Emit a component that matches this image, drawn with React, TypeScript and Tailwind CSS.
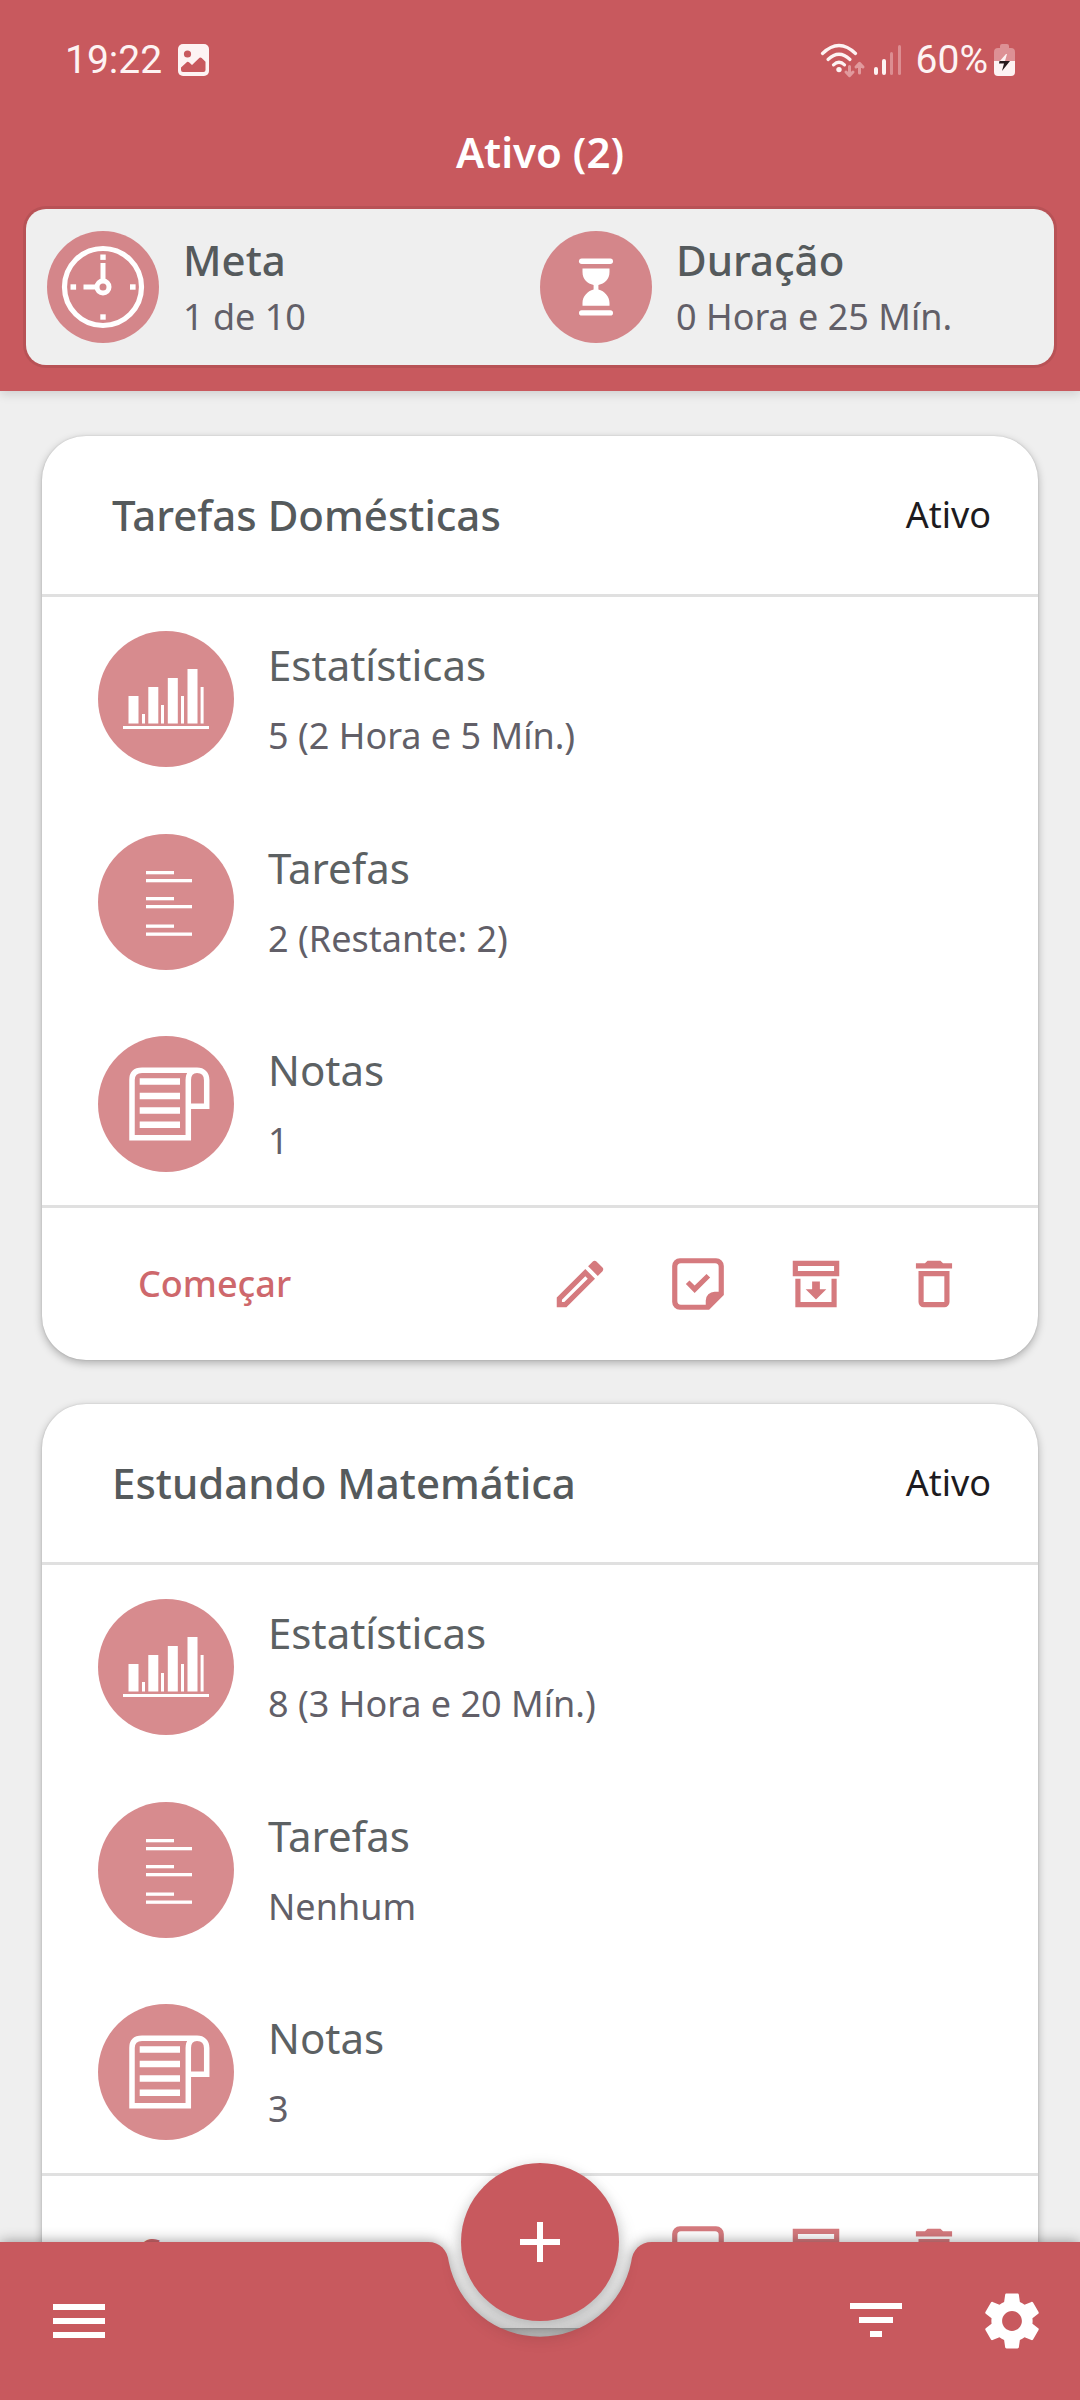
import React from "react";

type Stat = { kind: "stats" | "tasks" | "notes"; title: string; value: string };
type Project = { name: string; status: string; rows: Stat[] };

const projects: Project[] = [
  {
    name: "Tarefas Domésticas",
    status: "Ativo",
    rows: [
      { kind: "stats", title: "Estatísticas", value: "5 (2 Hora e 5 Mín.)" },
      { kind: "tasks", title: "Tarefas", value: "2 (Restante: 2)" },
      { kind: "notes", title: "Notas", value: "1" },
    ],
  },
  {
    name: "Estudando Matemática",
    status: "Ativo",
    rows: [
      { kind: "stats", title: "Estatísticas", value: "8 (3 Hora e 20 Mín.)" },
      { kind: "tasks", title: "Tarefas", value: "Nenhum" },
      { kind: "notes", title: "Notas", value: "3" },
    ],
  },
];

function ImageIcon() {
  return (
    <svg width="31" height="32" viewBox="0 0 31 32" aria-hidden="true">
      <rect width="31" height="32" rx="5" fill="#fdf3f3" />
      <circle cx="9.5" cy="10" r="3.6" fill="#c8595e" />
      <path
        d="M3 23.5 L9 18 Q10 17.4 11 18.2 L14 21 L21.5 13.8 Q22.6 13 23.7 13.9 L27.5 17.8 V26 Q27.5 28 25.5 28 H5 Q3 28 3 26 Z"
        fill="#c8595e"
      />
    </svg>
  );
}

function WifiIcon() {
  return (
    <svg width="46" height="36" viewBox="0 0 46 36" fill="none" strokeLinecap="round" aria-hidden="true">
      <g stroke="#fdf3f3" strokeWidth="3.2">
        <path d="M2.5 11.5 Q19 -4.5 35.5 11.5" />
        <path d="M8 17.5 Q19 7 30 17.5" />
        <path d="M13.5 22.8 Q19 17.6 24.5 22.8" />
      </g>
      <circle cx="19" cy="27.6" r="2.7" fill="#fdf3f3" />
      <g stroke="#e19a9d" strokeWidth="3" strokeLinejoin="round">
        <path d="M29.5 24.5 V33 M26 30 L29.5 33.6 L33 30" />
        <path d="M39.5 31 V22 M36 25 L39.5 21.4 L43 25" />
      </g>
    </svg>
  );
}

function SignalIcon() {
  return (
    <svg width="28" height="30" viewBox="0 0 28 30" aria-hidden="true">
      <rect x="0" y="22" width="4" height="8" rx="2" fill="#fdf3f3" />
      <rect x="8" y="14" width="4" height="16" rx="2" fill="#fdf3f3" />
      <rect x="16" y="7" width="3" height="23" rx="1.5" fill="#dc8d91" />
      <rect x="24" y="0" width="3" height="30" rx="1.5" fill="#dc8d91" />
    </svg>
  );
}

function BatteryIcon() {
  return (
    <svg width="21" height="32" viewBox="0 0 21 32" aria-hidden="true">
      <path d="M6 4 V2 Q6 0 8 0 H13 Q15 0 15 2 V4 H17 Q21 4 21 8 V17 H0 V8 Q0 4 4 4 Z" fill="#dd9195" />
      <path d="M0 17 H21 V28 Q21 32 17 32 H4 Q0 32 0 28 Z" fill="#fdf3f3" />
      <path d="M12 10 L5 18 H10 L8 27 L16 17 H11 L13 10 Z" fill="#fdf3f3" />
      <path d="M5.5 17 H16 L8 27 L10 19.5 H5 Z" fill="#261a1c" />
    </svg>
  );
}

function ClockIcon() {
  return (
    <svg viewBox="0 0 112 112" className="size-full" fill="none" stroke="#fff" aria-hidden="true">
      <circle cx="56" cy="56" r="38.5" strokeWidth="5.2" />
      <circle cx="56" cy="56" r="6" strokeWidth="5" />
      <path d="M56 48.5 V32 M48.5 56 H36.5" strokeWidth="5" />
      <g fill="#fff" stroke="none">
        <rect x="53.3" y="23.5" width="5.4" height="5.4" />
        <rect x="53.3" y="83.3" width="5.4" height="5.4" />
        <rect x="23.5" y="53.3" width="5.6" height="5.4" />
        <rect x="83" y="53.3" width="5.6" height="5.4" />
      </g>
    </svg>
  );
}

function HourglassIcon() {
  return (
    <svg viewBox="0 0 112 112" className="size-full" fill="#fff" aria-hidden="true">
      <rect x="39" y="27.5" width="34" height="5.4" rx="2.7" />
      <rect x="39" y="79.2" width="34" height="5.4" rx="2.7" />
      <path d="M42.5 37.5 H69.5 V41 C69.5 48.5 64.5 52.5 58.4 54 V58.5 C64.5 60 69.5 65.5 69.5 72 V74.8 H42.5 V72 C42.5 65.5 47.5 60 53.6 58.5 V54 C47.5 52.5 42.5 48.5 42.5 41 Z" />
    </svg>
  );
}

function RowIcon({ kind }: { kind: Stat["kind"] }) {
  if (kind === "stats") {
    return (
      <svg viewBox="0 0 136 136" className="size-full" fill="#fff" aria-hidden="true">
        <rect x="25" y="95" width="86" height="3" />
        <rect x="30.5" y="65" width="10" height="27.5" />
        <rect x="44" y="83" width="3" height="9.5" />
        <rect x="50.3" y="56" width="10" height="36.5" />
        <rect x="63" y="74" width="3" height="18.5" />
        <rect x="69.8" y="47" width="10" height="45.5" />
        <rect x="83" y="65" width="3" height="27.5" />
        <rect x="89.5" y="38" width="10" height="54.5" />
        <rect x="102.6" y="56" width="3" height="36.5" />
      </svg>
    );
  }
  if (kind === "tasks") {
    return (
      <svg viewBox="0 0 136 136" className="size-full" fill="#fff" aria-hidden="true">
        <rect x="48" y="37" width="28" height="3.3" />
        <rect x="48" y="45" width="46" height="3.3" />
        <rect x="48" y="63" width="28" height="3.3" />
        <rect x="48" y="71" width="46" height="3.3" />
        <rect x="48" y="90.5" width="28" height="3.3" />
        <rect x="48" y="98.5" width="46" height="3.3" />
      </svg>
    );
  }
  return (
    <svg viewBox="0 0 136 136" className="size-full" fill="none" stroke="#fff" strokeWidth="5.5" aria-hidden="true">
      <path d="M99 34.2 H44 Q34 34.2 34 44 V101.7 H90.3 V44 C90.3 37.5 94 34.2 99 34.2 C105 34.2 108.7 38 108.7 44 V70.2 H90.3" />
      <path d="M41.7 45.5 H82 M41.7 60 H82 M41.7 74.5 H82 M41.7 88.8 H82" strokeWidth="6.4" />
    </svg>
  );
}

function IconButton({ label, children }: { label: string; children: React.ReactNode }) {
  return (
    <button type="button" aria-label={label} className="flex size-[62px] items-center justify-center text-[#d57a7e]">
      <svg viewBox="0 0 24 24" className="size-full" fill="currentColor" aria-hidden="true">
        {children}
      </svg>
    </button>
  );
}

function SummaryItem({ icon, title, value }: { icon: React.ReactNode; title: string; value: string }) {
  return (
    <div className="flex items-center gap-[24px]">
      <div className="size-[112px] shrink-0 rounded-full bg-[#d4868a]">{icon}</div>
      <div className="flex flex-col gap-[6px]">
        <span className="text-[42px] leading-[54px] font-medium text-[#555a5c]">{title}</span>
        <span className="text-[36px] leading-[48px] text-[#625f68]">{value}</span>
      </div>
    </div>
  );
}

function ProjectCard({ project }: { project: Project }) {
  return (
    <article className="rounded-[44px] bg-white shadow-[0_3px_8px_rgba(0,0,0,0.28),0_0_2px_rgba(0,0,0,0.14)]">
      <header className="flex h-[158px] items-center justify-between pr-[47px] pl-[70px]">
        <h2 className="text-[42px] leading-[54px] font-medium text-[#555a5c]">{project.name}</h2>
        <span className="text-[36px] leading-[48px] text-[#1d1b20]">{project.status}</span>
      </header>
      <ul className="border-y-[3px] border-[#e0e0e0]">
        {project.rows.map((row) => (
          <li key={row.kind} className="flex h-[203px] items-center gap-[34px] pl-[56px] last:h-[202px]">
            <div className="size-[136px] shrink-0 rounded-full bg-[#d78b8e]">
              <RowIcon kind={row.kind} />
            </div>
            <div className="flex flex-col gap-[20px]">
              <span className="text-[42px] leading-[54px] text-[#5c6163]">{row.title}</span>
              <span className="text-[36px] leading-[48px] text-[#625f68]">{row.value}</span>
            </div>
          </li>
        ))}
      </ul>
      <footer className="flex h-[152px] items-center justify-between pr-[73px] pl-[96px]">
        <button type="button" className="text-[36px] leading-[48px] font-medium text-[#ce686c]">
          Começar
        </button>
        <div className="flex gap-[56px]">
          <IconButton label="Editar">
            <path d="M14.06,9L15,9.94L5.92,19H5V18.08L14.06,9M17.66,3C17.41,3 17.15,3.1 16.96,3.29L15.13,5.12L18.88,8.87L20.71,7.04C21.1,6.65 21.1,6 20.71,5.63L18.37,3.29C18.17,3.09 17.92,3 17.66,3M14.06,6.19L3,17.25V21H6.75L17.81,9.94L14.06,6.19Z" />
          </IconButton>
          <IconButton label="Concluir">
            <path
              fillRule="evenodd"
              d="M5 2H19A3 3 0 0 1 22 5V16.3L16.3 22H5A3 3 0 0 1 2 19V5A3 3 0 0 1 5 2ZM5.4 4A1.4 1.4 0 0 0 4 5.4V18.6A1.4 1.4 0 0 0 5.4 20H15V18.4A3.4 3.4 0 0 1 18.4 15H20V5.4A1.4 1.4 0 0 0 18.6 4Z"
            />
            <path d="M10.7 15.5L7.3 12L8.7 10.6L10.7 12.6L15.3 8.1L16.7 9.5Z" />
          </IconButton>
          <IconButton label="Arquivar">
            <path d="M20 21H4V10H6V19H18V10H20V21M3 3H21V9H3V3M5 5V7H19V5M10.5 11V14H8L12 18L16 14H13.5V11" />
          </IconButton>
          <IconButton label="Excluir">
            <path d="M6,19A2,2 0 0,0 8,21H16A2,2 0 0,0 18,19V7H6V19M8,9H16V19H8V9M15.5,4L14.5,3H9.5L8.5,4H5V6H19V4H15.5Z" />
          </IconButton>
        </div>
      </footer>
    </article>
  );
}

function BottomBar() {
  return (
    <nav className="fixed inset-x-0 bottom-0 h-[158px]">
      <div className="grid h-full grid-cols-[1fr_224px_1fr] [filter:drop-shadow(0_0_7px_rgba(0,0,0,0.4))]">
        <div className="flex items-center bg-[#c8595e] pl-[48px]">
          <button type="button" aria-label="Menu" className="size-[62px]">
            <svg viewBox="0 0 62 62" className="size-full" fill="#fff" aria-hidden="true">
              <rect x="5" y="14" width="52" height="6" />
              <rect x="5" y="28" width="52" height="6" />
              <rect x="5" y="42" width="52" height="6" />
            </svg>
          </button>
        </div>
        <svg width="224" height="158" viewBox="0 0 224 158" aria-hidden="true">
          <path
            d="M0 0 C12 0 19.5 8 20.8 20 A93 93 0 0 0 203.2 20 C204.5 8 212 0 224 0 V158 H0 Z"
            fill="#c8595e"
          />
        </svg>
        <div className="flex items-center justify-end gap-[70px] bg-[#c8595e] pr-[35px]">
          <button type="button" aria-label="Filtrar" className="size-[66px]">
            <svg viewBox="0 0 66 66" className="size-full" fill="#fff" aria-hidden="true">
              <rect x="7" y="15" width="52" height="6" />
              <rect x="16" y="29" width="34" height="6" />
              <rect x="27" y="43" width="12" height="6" />
            </svg>
          </button>
          <button type="button" aria-label="Configurações" className="size-[66px]">
            <svg viewBox="0 0 24 24" className="size-full" fill="#fff" aria-hidden="true">
              <path d="M19.43 12.98c.04-.32.07-.64.07-.98s-.03-.66-.07-.98l2.11-1.65c.19-.15.24-.42.12-.64l-2-3.46c-.12-.22-.39-.3-.61-.22l-2.49 1c-.52-.4-1.08-.73-1.69-.98l-.38-2.65C14.46 2.18 14.25 2 14 2h-4c-.25 0-.46.18-.49.42l-.38 2.65c-.61.25-1.17.59-1.69.98l-2.49-1c-.23-.09-.49 0-.61.22l-2 3.46c-.13.22-.07.49.12.64l2.11 1.65c-.04.32-.07.65-.07.98s.03.66.07.98l-2.11 1.65c-.19.15-.24.42-.12.64l2 3.46c.12.22.39.3.61.22l2.49-1c.52.4 1.08.73 1.69.98l.38 2.65c.03.24.24.42.49.42h4c.25 0 .46-.18.49-.42l.38-2.65c.61-.25 1.17-.59 1.69-.98l2.49 1c.23.09.49 0 .61-.22l2-3.46c.12-.22.07-.49-.12-.64l-2.11-1.65zM12 15.6c-1.98 0-3.6-1.62-3.6-3.6s1.62-3.6 3.6-3.6 3.6 1.62 3.6 3.6-1.62 3.6-3.6 3.6z" />
            </svg>
          </button>
        </div>
      </div>
      <button
        type="button"
        aria-label="Adicionar"
        className="absolute inset-x-0 -top-[79px] mx-auto size-[158px] rounded-full bg-[#c8595e] shadow-[0_12px_20px_rgba(0,0,0,0.22),0_2px_14px_rgba(0,0,0,0.12)]"
      >
        <svg viewBox="0 0 158 158" className="size-full" fill="#fff" aria-hidden="true">
          <rect x="59" y="76" width="40" height="6" />
          <rect x="76" y="59" width="6" height="40" />
        </svg>
      </button>
    </nav>
  );
}

export default function App() {
  return (
    <div className="min-h-screen bg-[#efefef] font-['Noto_Sans',sans-serif]">
      <header className="bg-[#c8595e] pb-[26px] shadow-[0_3px_10px_rgba(0,0,0,0.14)]">
        <div className="flex h-[120px] items-center justify-between px-[65px] font-['Roboto',sans-serif] text-[39px] leading-[46px] text-[#fdf3f3]">
          <div className="flex items-center gap-[16px]">
            <span>19:22</span>
            <ImageIcon />
          </div>
          <div className="flex items-center">
            <WifiIcon />
            <span className="ml-[8px]">
              <SignalIcon />
            </span>
            <span className="ml-[14px]">60%</span>
            <span className="ml-[6px]">
              <BatteryIcon />
            </span>
          </div>
        </div>
        <h1 className="mb-[25px] text-center text-[42px] leading-[64px] font-semibold text-white">Ativo (2)</h1>
        <section className="mx-[26px] grid h-[156px] grid-cols-2 rounded-[20px] bg-[#efefef] px-[21px] shadow-[0_0_0_3px_rgba(0,0,0,0.08)]">
          <SummaryItem icon={<ClockIcon />} title="Meta" value="1 de 10" />
          <SummaryItem icon={<HourglassIcon />} title="Duração" value="0 Hora e 25 Mín." />
        </section>
      </header>
      <main className="flex flex-col gap-[44px] px-[42px] pt-[45px] pb-[60px]">
        {projects.map((project) => (
          <ProjectCard key={project.name} project={project} />
        ))}
      </main>
      <BottomBar />
    </div>
  );
}
